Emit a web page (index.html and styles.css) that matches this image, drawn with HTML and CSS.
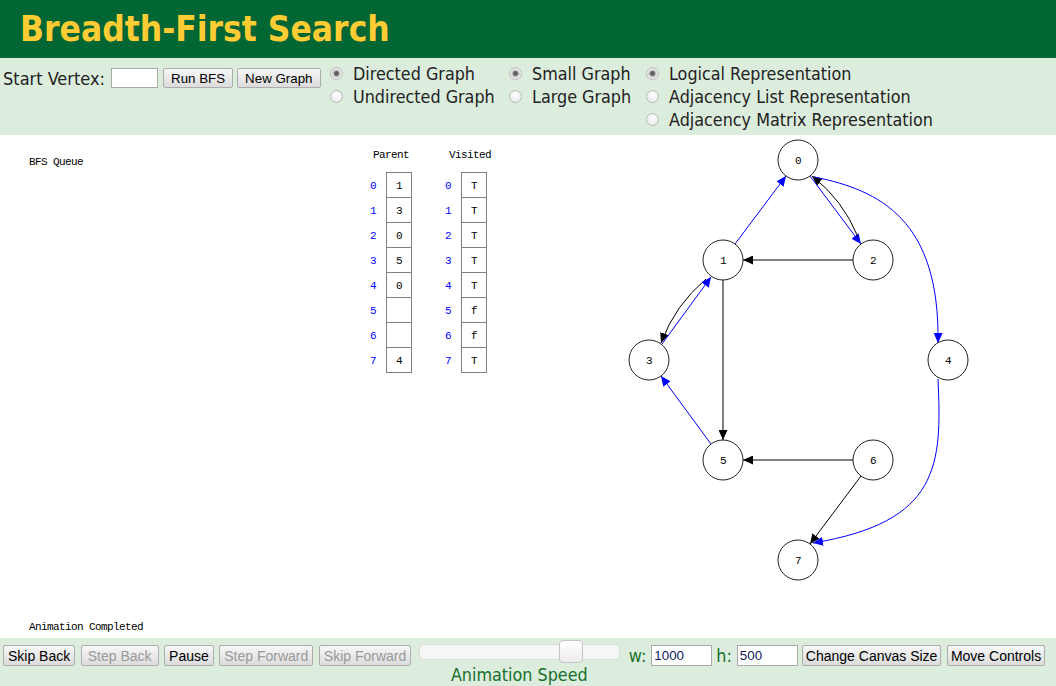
FILE: index.html
```html
<!DOCTYPE html>
<html>
<head>
<meta charset="utf-8">
<title>Breadth-First Search</title>
<link rel="stylesheet" href="styles.css">
</head>
<body>
<header class="title-bar"><h1>Breadth-First Search</h1></header>
<div class="controls">
  <div class="start">
    <span class="lbl">Start Vertex:</span>
    <input class="txt vertex" type="text">
    <button class="btn">Run BFS</button>
    <button class="btn">New Graph</button>
  </div>
  <div class="radio-col c1">
    <label class="opt"><input type="radio" name="dir" checked>Directed Graph</label>
    <label class="opt"><input type="radio" name="dir">Undirected Graph</label>
  </div>
  <div class="radio-col c2">
    <label class="opt"><input type="radio" name="size" checked>Small Graph</label>
    <label class="opt"><input type="radio" name="size">Large Graph</label>
  </div>
  <div class="radio-col c3">
    <label class="opt"><input type="radio" name="rep" checked>Logical Representation</label>
    <label class="opt"><input type="radio" name="rep">Adjacency List Representation</label>
    <label class="opt"><input type="radio" name="rep">Adjacency Matrix Representation</label>
  </div>
</div>
<div class="canvas">
<svg class="stage" width="1056" height="503" viewBox="0 135 1056 503" xmlns="http://www.w3.org/2000/svg">
  <defs>
    <marker id="ak" viewBox="0 0 10 9" refX="10" refY="4.5" markerWidth="10" markerHeight="9" markerUnits="userSpaceOnUse" orient="auto"><path d="M0,0 L10,4.5 L0,9 z" fill="#000"/></marker>
    <marker id="ab" viewBox="0 0 10 9" refX="10" refY="4.5" markerWidth="10" markerHeight="9" markerUnits="userSpaceOnUse" orient="auto"><path d="M0,0 L10,4.5 L0,9 z" fill="#0000ff"/></marker>
  </defs>
  <text class="cv" x="29" y="165">BFS Queue</text>
  <text class="cv" x="29" y="630">Animation Completed</text>

  <text class="cv mid" x="391" y="158">Parent</text>
  <text class="cv mid" x="470" y="158">Visited</text>
  <g class="arr">
    <rect x="386.5" y="172.5" width="25" height="25"/><rect x="386.5" y="197.5" width="25" height="25"/>
    <rect x="386.5" y="222.5" width="25" height="25"/><rect x="386.5" y="247.5" width="25" height="25"/>
    <rect x="386.5" y="272.5" width="25" height="25"/><rect x="386.5" y="297.5" width="25" height="25"/>
    <rect x="386.5" y="322.5" width="25" height="25"/><rect x="386.5" y="347.5" width="25" height="25"/>
    <rect x="461.5" y="172.5" width="25" height="25"/><rect x="461.5" y="197.5" width="25" height="25"/>
    <rect x="461.5" y="222.5" width="25" height="25"/><rect x="461.5" y="247.5" width="25" height="25"/>
    <rect x="461.5" y="272.5" width="25" height="25"/><rect x="461.5" y="297.5" width="25" height="25"/>
    <rect x="461.5" y="322.5" width="25" height="25"/><rect x="461.5" y="347.5" width="25" height="25"/>
  </g>
  <g class="cv mid idx">
    <text x="373" y="189">0</text><text x="373" y="214">1</text><text x="373" y="239">2</text><text x="373" y="264">3</text>
    <text x="373" y="289">4</text><text x="373" y="314">5</text><text x="373" y="339">6</text><text x="373" y="364">7</text>
    <text x="448" y="189">0</text><text x="448" y="214">1</text><text x="448" y="239">2</text><text x="448" y="264">3</text>
    <text x="448" y="289">4</text><text x="448" y="314">5</text><text x="448" y="339">6</text><text x="448" y="364">7</text>
  </g>
  <g class="cv mid">
    <text x="399" y="189">1</text><text x="399" y="214">3</text><text x="399" y="239">0</text><text x="399" y="264">5</text>
    <text x="399" y="289">0</text><text x="399" y="364">4</text>
    <text x="474" y="189">T</text><text x="474" y="214">T</text><text x="474" y="239">T</text><text x="474" y="264">T</text>
    <text x="474" y="289">T</text><text x="474" y="314">f</text><text x="474" y="339">f</text><text x="474" y="364">T</text>
  </g>

  <g class="edges">
    <path class="blue" d="M735,244 L786,176" marker-end="url(#ab)"/>
    <path class="blue" d="M810,176 L861,244" marker-end="url(#ab)"/>
    <path class="black" d="M858,237 Q843,200 812,176" marker-end="url(#ak)"/>
    <path class="black" d="M853,260 L743,260" marker-end="url(#ak)"/>
    <path class="blue" d="M814,177 C880,190 940,220 938,343" marker-end="url(#ab)"/>
    <path class="black" d="M706,279 Q675,305 661,343" marker-end="url(#ak)"/>
    <path class="blue" d="M662,344 L711,277" marker-end="url(#ab)"/>
    <path class="black" d="M723,280 L723,440" marker-end="url(#ak)"/>
    <path class="blue" d="M711,444 L661,376" marker-end="url(#ab)"/>
    <path class="black" d="M853,460 L743,460" marker-end="url(#ak)"/>
    <path class="black" d="M861,476 L810,544" marker-end="url(#ak)"/>
    <path class="blue" d="M938,379 C942,465 940,522 813,543" marker-end="url(#ab)"/>
  </g>

  <g class="nodes">
    <circle cx="798" cy="160" r="20"/><circle cx="723" cy="260" r="20"/>
    <circle cx="873" cy="260" r="20"/><circle cx="649" cy="360" r="20"/>
    <circle cx="948" cy="360" r="20"/><circle cx="723" cy="460" r="20"/>
    <circle cx="873" cy="460" r="20"/><circle cx="798" cy="560" r="20"/>
  </g>
  <g class="cv mid nlab">
    <text x="798" y="164">0</text><text x="723" y="264">1</text>
    <text x="873" y="264">2</text><text x="649" y="364">3</text>
    <text x="948" y="364">4</text><text x="723" y="464">5</text>
    <text x="873" y="464">6</text><text x="798" y="564">7</text>
  </g>
</svg>
</div>
<div class="bottom">
  <button class="btn big">Skip Back</button>
  <button class="btn big wide" disabled>Step Back</button>
  <button class="btn big">Pause</button>
  <button class="btn big" disabled>Step Forward</button>
  <button class="btn big" disabled>Skip Forward</button>
  <div class="speed">
    <div class="track"><div class="thumb"></div></div>
    <div class="speed-lbl">Animation Speed</div>
  </div>
  <span class="dim">w:</span>
  <input class="txt dimin" type="text" value="1000">
  <span class="dim">h:</span>
  <input class="txt dimin" type="text" value="500">
  <button class="btn big tight">Change Canvas Size</button>
  <button class="btn big tight">Move Controls</button>
</div>
</body>
</html>
```
FILE: styles.css
```css
html, body {
  margin: 0;
  padding: 0;
  background: #ffffff;
}
body {
  width: 1056px;
  height: 686px;
  overflow: hidden;
  font-family: "DejaVu Sans Condensed", "DejaVu Sans", sans-serif;
  font-stretch: condensed;
}
.title-bar {
  background: #006633;
  height: 58px;
}
.title-bar h1 {
  margin: 0;
  padding-left: 20px;
  line-height: 58px;
  font-size: 35px;
  font-weight: bold;
  color: #ffcc33;
}
.controls {
  background: #dcedde;
  height: 77px;
  box-sizing: border-box;
  padding: 4px 0 0 3px;
  display: flex;
  align-items: flex-start;
}
.start {
  display: flex;
  align-items: center;
  height: 22px;
  margin-top: 5px;
  width: 327px;
  flex-shrink: 0;
}
.lbl {
  font-size: 18px;
  color: #222;
  white-space: nowrap;
}
.txt {
  box-sizing: border-box;
  border: 1px solid #a9a9a9;
  background: #fff;
  font-family: "Liberation Sans Narrow", "Liberation Sans", Arial, sans-serif;
  font-size: 13.33px;
  color: #102060;
  padding: 1px 2px;
  margin: 0;
  flex-shrink: 0;
}
.vertex {
  width: 47px;
  height: 20px;
  margin: 0 5px 0 6px;
}
.btn {
  font-family: "Liberation Sans", Arial, sans-serif;
  font-size: 13.33px;
  color: #000;
  height: 20px;
  padding: 0 7px;
  margin: 0 4px 0 0;
  border: 1px solid #adadad;
  border-radius: 2px;
  background: linear-gradient(#f7f7f7, #dcdcdc);
  white-space: nowrap;
  flex-shrink: 0;
}
.btn:disabled {
  color: #9a9a9a;
}
.radio-col {
  display: flex;
  flex-direction: column;
  flex-shrink: 0;
}
.c1 { width: 179px; }
.c2 { width: 137px; }
.opt {
  display: flex;
  align-items: center;
  height: 23px;
  font-size: 17.8px;
  color: #222;
  white-space: nowrap;
}
.opt input {
  appearance: none;
  -webkit-appearance: none;
  width: 13px;
  height: 13px;
  margin: 0 10px 0 0;
  border: 1px solid #b8b8b8;
  border-radius: 50%;
  box-sizing: border-box;
  background: radial-gradient(circle at 50% 40%, #ffffff 0, #e4e4e4 100%);
  flex-shrink: 0;
}
.opt input:checked {
  background: radial-gradient(circle, #5a5a5a 0, #6a6a6a 2px, #c8c8c8 3.2px, #eeeeee 5px);
}
.canvas {
  height: 503px;
  background: #fff;
}
.stage {
  display: block;
}
.cv {
  font-family: "Liberation Mono", "DejaVu Sans Mono", monospace;
  font-size: 11px;
  letter-spacing: -0.6px;
  fill: #000;
}
.mid {
  text-anchor: middle;
}
.idx text {
  fill: #0000ff;
}
.arr rect {
  fill: #fff;
  stroke: #808080;
  stroke-width: 1;
}
.edges path {
  fill: none;
  stroke-width: 1;
}
.edges .blue { stroke: #0000ff; }
.edges .black { stroke: #000; }
.nodes circle {
  fill: #fff;
  stroke: #222;
  stroke-width: 1;
}
.bottom {
  background: #dcedde;
  height: 48px;
  box-sizing: border-box;
  padding: 7px 0 0 3px;
  display: flex;
  align-items: flex-start;
}
.btn.big {
  height: 21px;
  font-size: 14px;
  padding: 0 4px;
  margin-right: 5.5px;
}
.btn.big.wide {
  padding: 0 6px;
}
.btn.big.tight {
  padding: 0 3px;
}
.speed {
  width: 201px;
  margin: 0 9px 0 2px;
  display: flex;
  flex-direction: column;
  align-items: center;
  flex-shrink: 0;
}
.track {
  position: relative;
  width: 201px;
  height: 16px;
  box-sizing: border-box;
  margin-top: -1px;
  border: 1px solid #dadada;
  border-radius: 5px;
  background: #f6f6f6;
}
.thumb {
  position: absolute;
  left: 139px;
  top: -5px;
  width: 24px;
  height: 23px;
  box-sizing: border-box;
  border: 1px solid #c5c5c5;
  border-radius: 4px;
  background: linear-gradient(#ffffff, #ececec);
}
.speed-lbl {
  font-size: 17.8px;
  color: #17702b;
  margin-top: 5px;
  line-height: 20px;
  white-space: nowrap;
}
.dim {
  font-size: 17.8px;
  color: #17702b;
  line-height: 21px;
  margin-right: 5px;
}
.dimin {
  width: 61px;
  height: 21px;
  margin-right: 4px;
}
```
